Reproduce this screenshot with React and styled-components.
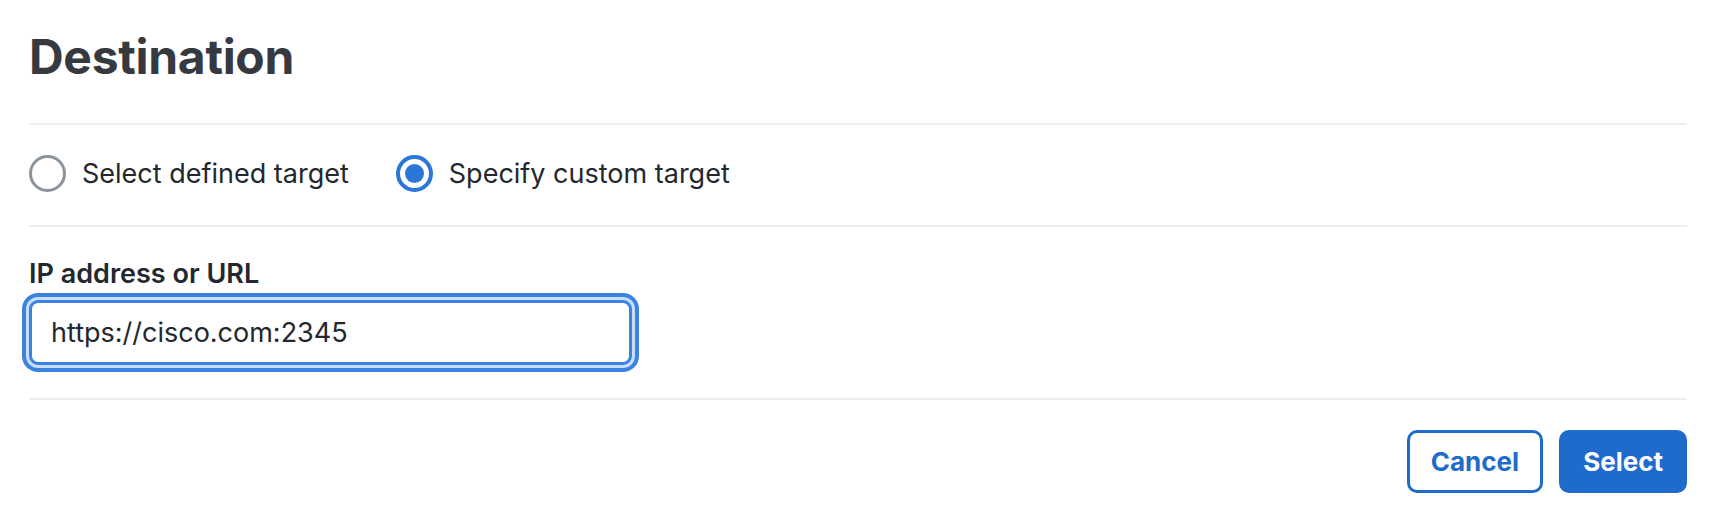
import React, { useState } from "react";
import styled, { createGlobalStyle } from "styled-components";

const GlobalStyle = createGlobalStyle`
  html, body {
    margin: 0;
    padding: 0;
    background: #ffffff;
  }
  body {
    font-family: Inter, "Noto Sans", sans-serif;
    -webkit-font-smoothing: antialiased;
  }
  * { box-sizing: border-box; }
`;

const Page = styled.div`
  width: 1716px;
  height: 528px;
  padding: 0 29px;
  background: #ffffff;
`;

const Header = styled.header`
  padding: 28px 0 37px;
`;

const Title = styled.h1`
  margin: 0;
  font-family: Inter, sans-serif;
  font-size: 48px;
  line-height: 58px;
  font-weight: 700;
  letter-spacing: -0.3px;
  color: #363a40;
`;

const Divider = styled.hr`
  margin: 0;
  border: 0;
  border-top: 2px solid #eeeeee;
  height: 0;
`;

const RadioGroup = styled.div`
  display: flex;
  align-items: center;
  gap: 47px;
  padding: 30px 0 33px;
`;

const RadioOption = styled.label`
  display: flex;
  align-items: center;
  gap: 16px;
  cursor: pointer;
  font-size: 27px;
  line-height: 37px;
  color: #23282e;
`;

const RadioCircle = styled.span`
  width: 37px;
  height: 37px;
  border-radius: 50%;
  border: ${(p) => (p.$checked ? "4px solid #2a77d9" : "3px solid #8b939b")};
  display: flex;
  align-items: center;
  justify-content: center;
  flex: none;
  &::after {
    content: "";
    display: ${(p) => (p.$checked ? "block" : "none")};
    width: 19px;
    height: 19px;
    border-radius: 50%;
    background: #2a77d9;
  }
`;

const HiddenRadio = styled.input`
  position: absolute;
  opacity: 0;
  width: 0;
  height: 0;
  margin: 0;
`;

const Field = styled.div`
  padding: 30px 0 33px;
  display: flex;
  flex-direction: column;
`;

const FieldLabel = styled.label`
  font-size: 27px;
  line-height: 34px;
  font-weight: 600;
  color: #23282e;
  margin-bottom: 9px;
`;

const TextInput = styled.input`
  width: 603px;
  height: 65px;
  padding: 0 19px;
  font-family: Inter, sans-serif;
  font-size: 27px;
  color: #23282e;
  border: 3px solid #3c83e1;
  border-radius: 9px;
  outline: none;
  box-shadow: 0 0 0 3px #c8ddf8, 0 0 0 7px #3c83e1;
  background: #ffffff;
`;

const Footer = styled.footer`
  display: flex;
  justify-content: flex-end;
  gap: 16px;
  padding-top: 30px;
`;

const Button = styled.button`
  height: 63px;
  padding: 0 21px;
  font-family: Inter, sans-serif;
  font-size: 26px;
  font-weight: 700;
  border-radius: 10px;
  border: 3px solid #1f6bcc;
  cursor: pointer;
  background: ${(p) => (p.$primary ? "#1f6bcc" : "#ffffff")};
  color: ${(p) => (p.$primary ? "#ffffff" : "#1f6bcc")};
`;

export default function App() {
  const [mode, setMode] = useState("custom");
  const [url, setUrl] = useState("https://cisco.com:2345");

  const options = [
    { id: "defined", label: "Select defined target" },
    { id: "custom", label: "Specify custom target" },
  ];

  return (
    <>
      <GlobalStyle />
      <Page>
        <Header>
          <Title>Destination</Title>
        </Header>
        <Divider />
        <RadioGroup role="radiogroup">
          {options.map((o) => (
            <RadioOption key={o.id}>
              <HiddenRadio
                type="radio"
                name="target"
                checked={mode === o.id}
                onChange={() => setMode(o.id)}
              />
              <RadioCircle $checked={mode === o.id} />
              {o.label}
            </RadioOption>
          ))}
        </RadioGroup>
        <Divider />
        <Field>
          <FieldLabel htmlFor="dest-url">IP address or URL</FieldLabel>
          <TextInput
            id="dest-url"
            value={url}
            onChange={(e) => setUrl(e.target.value)}
          />
        </Field>
        <Divider />
        <Footer>
          <Button>Cancel</Button>
          <Button $primary>Select</Button>
        </Footer>
      </Page>
    </>
  );
}
